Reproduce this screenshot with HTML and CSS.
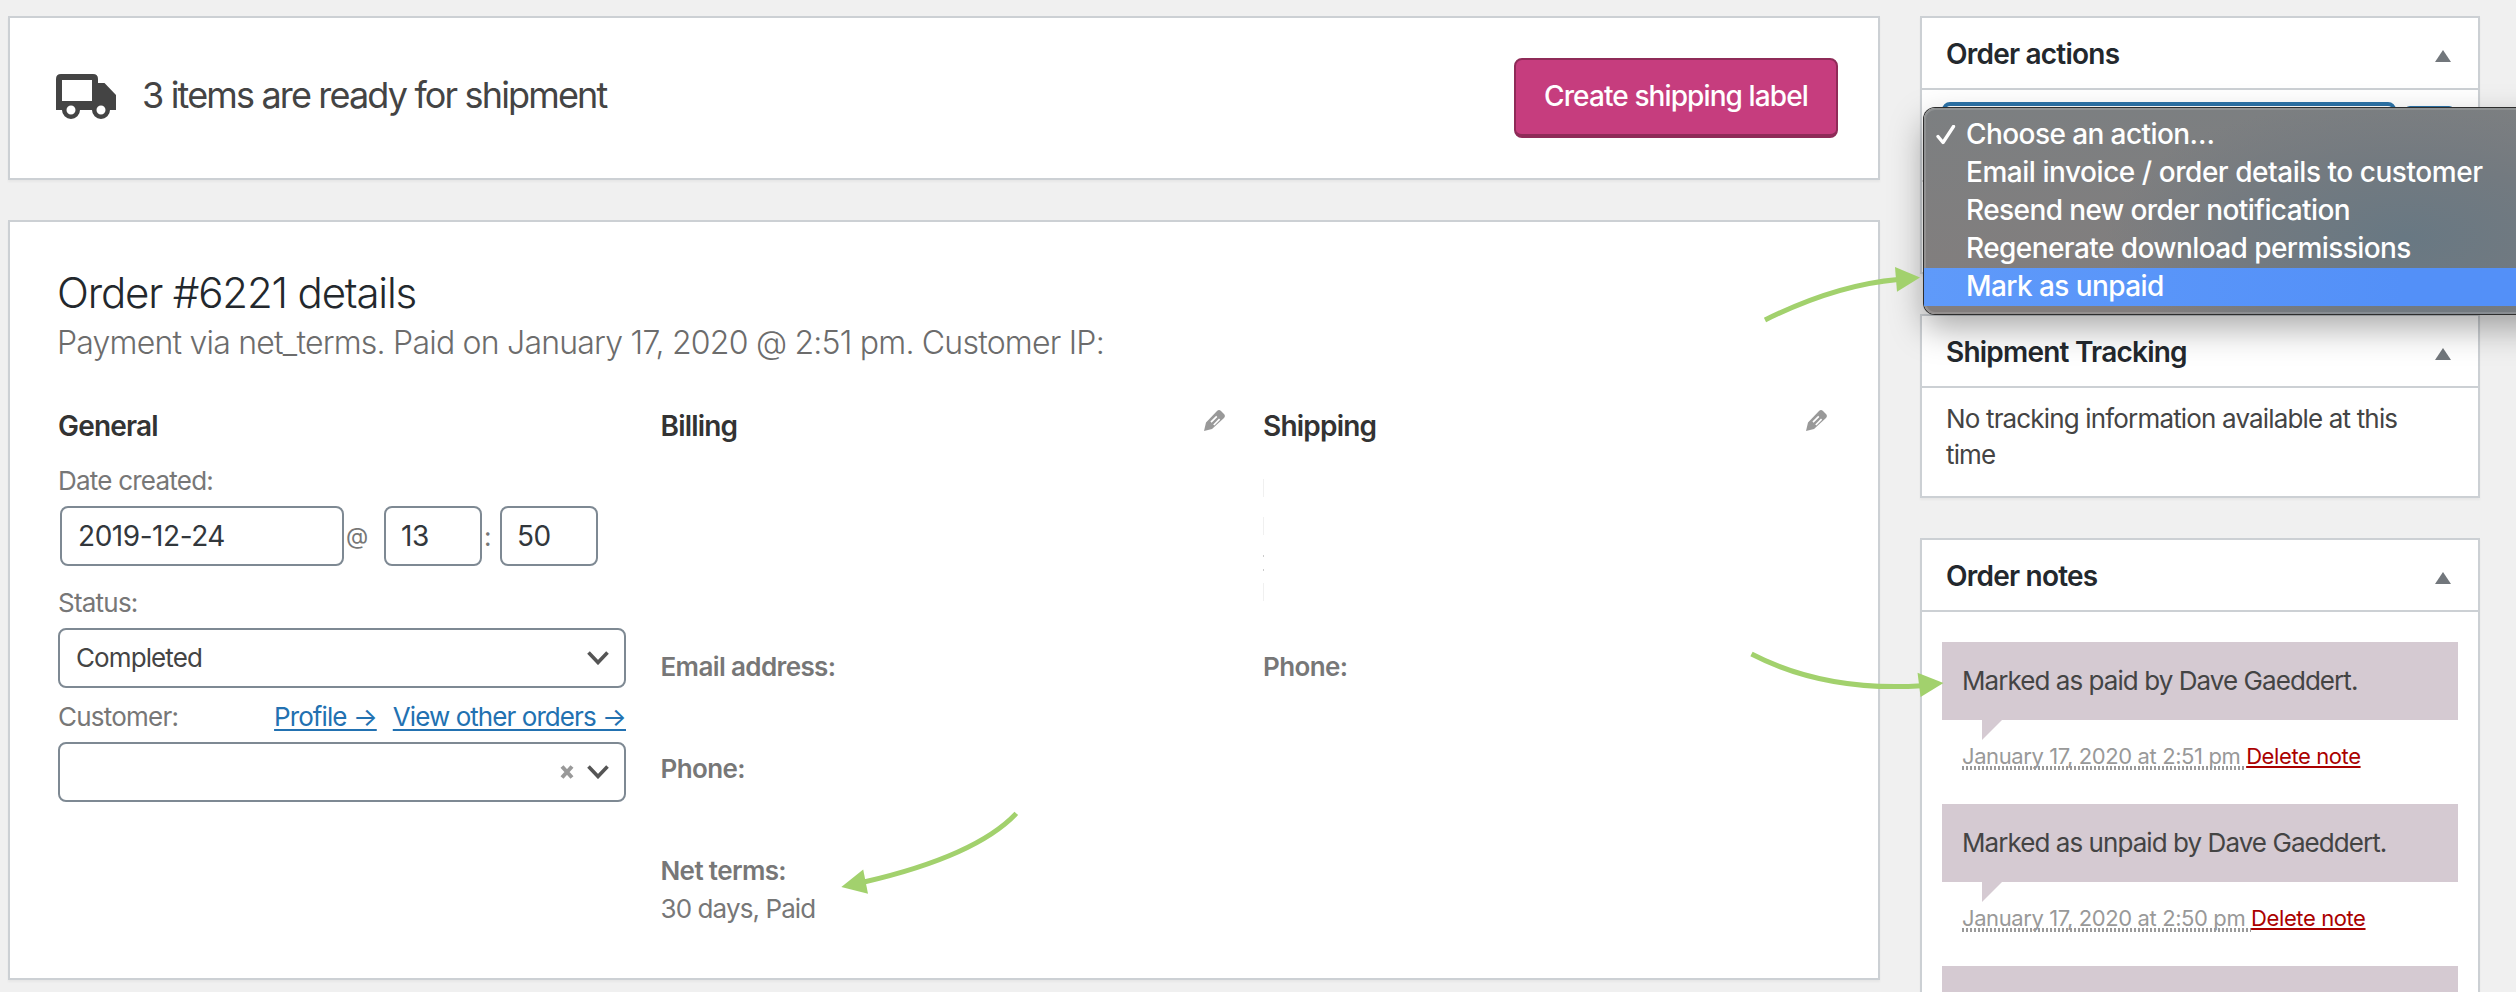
FILE: index.html
```html
<!DOCTYPE html>
<html lang="en">
<head>
<meta charset="utf-8">
<title>Order #6221</title>
<link rel="stylesheet" href="styles.css">
</head>
<body>
<div class="screen">
  <main class="main">
    <section class="card shipment">
      <svg class="truck" viewBox="0 0 60 45"><path fill="#444" fill-rule="evenodd" d="M5 0H37Q42 0 42 5V9H48.500L60 21V36H54A9 9 0 1 1 36 36H24A9 9 0 1 1 6 36H0V5Q0 0 5 0ZM6 6V27H36V6ZM15 31.500A4.500 4.500 0 1 0 15 40.500A4.500 4.500 0 1 0 15 31.500ZM45 31.500A4.500 4.500 0 1 0 45 40.500A4.500 4.500 0 1 0 45 31.500Z"/></svg>
      <span class="shipment-text">3 items are ready for shipment</span>
      <button class="primary">Create shipping label</button>
    </section>

    <section class="card order">
      <h1 class="order-title">Order #6221 details</h1>
      <p class="order-meta">Payment via net_terms. Paid on January 17, 2020 @ 2:51 pm. Customer IP:</p>
      <div class="columns">
        <div class="column">
          <h3 class="column-title">General</h3>
          <div class="label date-label">Date created:</div>
          <div class="date-row">
            <div class="field date">2019-12-24</div><span class="at">@</span>
            <div class="field hour">13</div><span class="colon">:</span>
            <div class="field minute">50</div>
          </div>
          <div class="label status-label">Status:</div>
          <div class="field select"><span>Completed</span><svg class="chevron" viewBox="0 0 22 14"><path d="M1.500 1.500L11 11.500L20.500 1.500" fill="none" stroke="#555" stroke-width="3.600"/></svg></div>
          <div class="label customer-label"><span>Customer:</span><a class="link profile">Profile →</a><a class="link others">View other orders →</a></div>
          <div class="field select customer"><svg class="clear" viewBox="0 0 14 14"><path d="M2 1.500L12 12.500M12 1.500L2 12.500" stroke="#999" stroke-width="4"/></svg><svg class="chevron" viewBox="0 0 22 14"><path d="M1.500 1.500L11 11.500L20.500 1.500" fill="none" stroke="#555" stroke-width="3.600"/></svg></div>
        </div>
        <div class="column">
          <h3 class="column-title"><span>Billing</span><svg class="pencil" viewBox="0 0 21 21"><path fill="#999" fill-rule="evenodd" d="M13 1Q15 -0.800 17 1L20 4Q21.800 6 20 8L8 19L0 21L2 12.500ZM12.200 5.800L6.400 11.600L7.600 12.800L13.400 7ZM15 8.600L9.200 14.400L10.400 15.600L16.200 9.800Z"/></svg></h3>
          <div class="label strong email">Email address:</div>
          <div class="label strong phone">Phone:</div>
          <div class="label strong terms">Net terms:</div>
          <div class="label terms-value">30 days, Paid</div>
        </div>
        <div class="column">
          <h3 class="column-title"><span>Shipping</span><svg class="pencil" viewBox="0 0 21 21"><path fill="#999" fill-rule="evenodd" d="M13 1Q15 -0.800 17 1L20 4Q21.800 6 20 8L8 19L0 21L2 12.500ZM12.200 5.800L6.400 11.600L7.600 12.800L13.400 7ZM15 8.600L9.200 14.400L10.400 15.600L16.200 9.800Z"/></svg></h3>
          <div class="redacted"><i></i><i></i><b></b><b></b><i></i></div>
          <div class="label strong ship-phone">Phone:</div>
        </div>
      </div>
    </section>
  </main>

  <aside class="side">
    <section class="card actions">
      <h2 class="box-title"><span>Order actions</span><i class="toggle"></i></h2>
      <div class="actions-body"><div class="action-select"></div><div class="action-go"></div></div>
      <div class="menu">
        <div class="item"><svg class="check" viewBox="0 0 20 20"><path d="M2 11.500L7 17.500L17.500 1.500" fill="none" stroke="#fff" stroke-width="3.300" stroke-linecap="round" stroke-linejoin="round"/></svg>Choose an action…</div>
        <div class="item wide">Email invoice / order details to customer</div>
        <div class="item">Resend new order notification</div>
        <div class="item">Regenerate download permissions</div>
        <div class="item active">Mark as unpaid</div>
      </div>
    </section>

    <section class="card tracking">
      <h2 class="box-title"><span>Shipment Tracking</span><i class="toggle"></i></h2>
      <p class="tracking-text">No tracking information available at this<br>time</p>
    </section>

    <section class="card notes">
      <h2 class="box-title"><span>Order notes</span><i class="toggle"></i></h2>
      <div class="note"><div class="bubble">Marked as paid by Dave Gaeddert.</div><div class="note-meta"><span class="when">January 17, 2020 at 2:51 pm </span><a class="delete">Delete note</a></div></div>
      <div class="note"><div class="bubble">Marked as unpaid by Dave Gaeddert.</div><div class="note-meta"><span class="when">January 17, 2020 at 2:50 pm </span><a class="delete">Delete note</a></div></div>
      <div class="note"><div class="bubble"></div></div>
    </section>
  </aside>

  <svg class="arrows" viewBox="0 0 2516 992">
    <g fill="none" stroke="#a2d16d" stroke-width="5">
      <path d="M1765 320Q1835.500 285 1898 279.500"/>
      <path d="M1751.500 654Q1825 692 1922 685.700"/>
      <path d="M1016.300 813.400Q976 856 864 882"/>
    </g>
    <g fill="#a2d16d">
      <path d="M1895 267L1920 277.500L1897 291.700Z"/>
      <path d="M1917.500 672.700L1943.500 683L1920.600 697Z"/>
      <path d="M841.300 887L863.200 869.500L868 893.700Z"/>
    </g>
  </svg>
</div>
</body>
</html>
```
FILE: styles.css
```css
* { box-sizing: border-box; }
body { margin: 0; background: #f0f0f0; font-family: Inter, "Liberation Sans", sans-serif; font-feature-settings: "calt" 0; }
h1, h2, h3, p { margin: 0; }
.screen { position: relative; width: 2516px; height: 992px; overflow: hidden; display: flex; gap: 40px; padding: 16px 0 0 8px; }
.main { width: 1872px; flex: none; display: flex; flex-direction: column; gap: 40px; }
.side { width: 560px; flex: none; display: flex; flex-direction: column; gap: 40px; }
.card { flex: none; background: #fff; border: 2px solid #ccd0d4; box-shadow: 0 2px 2px rgba(0, 0, 0, .04); }

.shipment { height: 164px; display: flex; align-items: center; padding: 0 40px 0 46px; }
.truck { width: 60px; height: 45px; margin-top: -4px; }
.shipment-text { margin-left: 26px; margin-top: -6px; font-size: 36px; color: #444; letter-spacing: -1.84px; white-space: nowrap; }
.primary { margin: 0 0 0 auto; width: 324px; height: 80px; border: 2px solid #8f2b58; border-bottom-width: 4px; border-radius: 8px; background: #c63d7e; color: #fff; font: 550 28px/72px Inter, sans-serif; letter-spacing: -.9px; padding: 0 0 2px; white-space: nowrap; }

.order { height: 760px; padding: 0 48px; white-space: nowrap; }
.order-title { margin: 45px 0 0 -1px; font: 300 42px/52px Inter, sans-serif; letter-spacing: -1.17px; color: #23282d; }
.order-meta { margin: 2px 0 0 -1px; font: 300 32px/44px Inter, sans-serif; letter-spacing: -.78px; color: #6c6c6c; }
.columns { display: flex; gap: 34.5px; margin-top: 41px; }
.column { width: 568px; flex: none; }
.column-title { display: flex; justify-content: space-between; font-size: 28px; line-height: 40px; font-weight: 600; color: #333; letter-spacing: -.8px; }
.pencil { width: 21px; height: 21px; margin: 4px 4px 0 0; }
.label { font-size: 26px; line-height: 36px; color: #777; letter-spacing: -.78px; }
.strong { font-weight: 600; letter-spacing: -.62px; }
.date-label { margin-top: 17px; }
.date-row { display: flex; align-items: center; margin: 7px 0 0 2px; color: #777; font-size: 26px; }
.field { height: 60px; border: 2px solid #7e8993; border-radius: 8px; background: #fff; color: #32373c; font-size: 28px; line-height: 56px; padding-left: 16px; letter-spacing: -.45px; }
.date { width: 284px; }
.hour, .minute { width: 98px; padding-left: 15px; }
.at { width: 40px; padding-left: 2px; font-size: 23px; }
.colon { width: 18px; padding-left: 2px; }
.status-label { margin-top: 19px; }
.select { width: 568px; margin-top: 7px; display: flex; align-items: center; justify-content: space-between; padding-right: 15px; font-size: 26px; color: #444; letter-spacing: -.9px; }
.chevron { width: 22px; height: 14px; }
.customer-label { display: flex; margin-top: 11px; }
.link { color: #2271b1; text-decoration: underline; text-decoration-thickness: 2px; text-underline-offset: 3px; letter-spacing: -.93px; }
.profile { margin-left: auto; }
.others { margin-left: 16px; }
.customer { margin-top: 7px; justify-content: flex-end; }
.clear { width: 14px; height: 14px; margin-right: 13px; }
.email { margin-top: 203px; }
.phone { margin-top: 66px; }
.terms { margin-top: 66px; }
.terms-value { margin-top: 2px; letter-spacing: -.9px; }
.redacted { height: 203px; padding-top: 28px; }
.redacted i { display: block; width: 1px; height: 18px; margin: 5px 0 20px; background: #f0f0f0; }
.redacted b { display: block; width: 1px; height: 2px; margin-bottom: 12px; background: #ccc; }

.box-title { display: flex; align-items: center; justify-content: space-between; height: 72px; border-bottom: 2px solid #ccd0d4; padding: 0 27px 0 24px; font-size: 28px; line-height: 70px; font-weight: 600; color: #23282d; letter-spacing: -.78px; }
.box-title span { padding-top: 3px; line-height: 67px; }
.toggle { width: 16px; height: 12px; margin-top: 6px; background: #72777c; clip-path: polygon(50% 0, 100% 100%, 0 100%); }
.actions { position: relative; height: 258px; }
.actions-body { display: flex; align-items: flex-start; gap: 8px; height: 92px; padding: 12px 20px 0; border-bottom: 2px solid #ddd; }
.action-select { width: 454px; height: 60px; border: 4px solid #2c73a8; border-radius: 8px; }
.action-go { width: 51px; height: 56px; margin-top: 4px; border: 2px solid #2c73a8; border-radius: 6px; }
.menu { position: absolute; left: 2px; top: 90px; width: 640px; height: 206px; padding-top: 8px; border-radius: 11px; background: radial-gradient(ellipse 300px 140px at 480px 130px, #687883 0, #737a80 55%, rgba(128, 128, 128, 0) 100%), linear-gradient(#7c7f81, #837e7d); box-shadow: 0 0 0 1px #2d2d2d, inset 0 0 0 2px rgba(255, 255, 255, .14), 0 14px 34px rgba(0, 0, 0, .34); z-index: 2; }
.item { position: relative; height: 38px; padding-left: 42px; font-size: 28px; line-height: 36px; font-weight: 500; color: #fff; letter-spacing: -.58px; white-space: nowrap; }
.wide { letter-spacing: -.46px; }
.active { background: linear-gradient(90deg, #5f9afa, #5390f8 75%); }
.check { position: absolute; left: 12px; top: 9px; width: 20px; height: 20px; }

.tracking { height: 184px; }
.tracking-text { padding: 13px 24px; font-size: 26px; line-height: 36px; color: #444; letter-spacing: -.84px; white-space: nowrap; }

.notes { height: 520px; }
.note { height: 162px; padding: 0 20px; white-space: nowrap; }
.box-title + .note { margin-top: 30px; }
.bubble { position: relative; height: 78px; padding-left: 20px; background: #d5cad2; color: #444; font-size: 26px; line-height: 77px; letter-spacing: -.94px; }
.bubble::after { content: ""; position: absolute; left: 40px; top: 78px; width: 20px; height: 20px; background: #d5cad2; clip-path: polygon(0 0, 100% 0, 0 100%); }
.note-meta { display: flex; padding: 20px 0 0 20px; font-size: 22px; line-height: 32px; color: #999; letter-spacing: -.4px; }
.when { white-space: pre; height: 30px; background: repeating-linear-gradient(90deg, #999 0 2px, transparent 2px 4px) 0 100% / 100% 4px no-repeat; }
.delete { color: #a00; text-decoration: underline; text-decoration-thickness: 2px; text-underline-offset: 2px; }
.arrows { position: absolute; left: 0; top: 0; width: 2516px; height: 992px; z-index: 3; pointer-events: none; }
```
